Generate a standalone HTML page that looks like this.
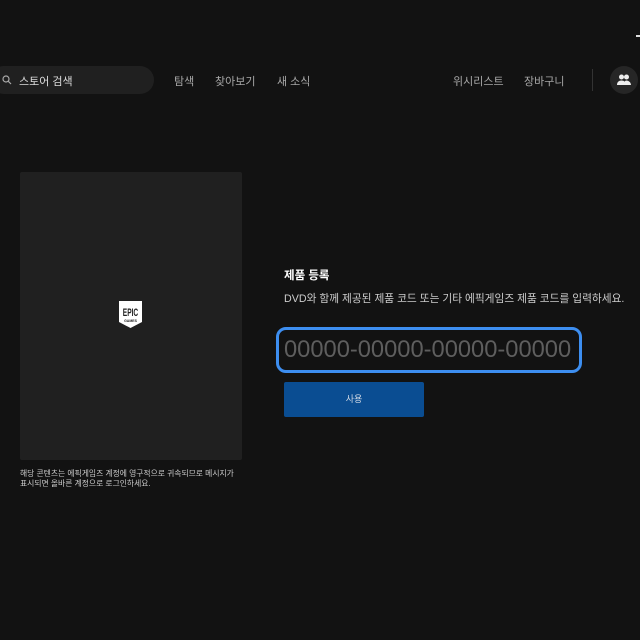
<!DOCTYPE html>
<html><head><meta charset="utf-8"><style>
body{margin:0;width:640px;height:640px;background:#121212;font-family:"Liberation Sans","Noto Sans CJK KR",sans-serif;overflow:hidden;position:relative;color:#ccc}
.a{position:absolute}
.nav{font-size:11px;color:#a8a8a8;top:73px}
</style></head><body>
<div class="a" style="left:636px;top:35px;width:4px;height:2px;background:#ddd"></div>
<div class="a" style="left:-10px;top:66px;width:164px;height:28px;border-radius:14px;background:#202020"></div>
<svg class="a" style="left:2px;top:75px" width="10" height="10" viewBox="0 0 10 10"><circle cx="4" cy="4" r="3" fill="none" stroke="#aaa" stroke-width="1.2"/><path d="M6.2 6.2L9 9" stroke="#aaa" stroke-width="1.2"/></svg>
<div class="a" style="left:19px;top:73px;font-size:11px;color:#ddd">스토어 검색</div>
<div class="a nav" style="left:174px">탐색</div>
<div class="a nav" style="left:215px">찾아보기</div>
<div class="a nav" style="left:277px">새 소식</div>
<div class="a nav" style="left:453px">위시리스트</div>
<div class="a nav" style="left:524px">장바구니</div>
<div class="a" style="left:592px;top:69px;width:1px;height:22px;background:#333"></div>
<div class="a" style="left:610px;top:66px;width:28px;height:28px;border-radius:14px;background:#262626"></div>
<svg class="a" style="left:616px;top:73px" width="16" height="14" viewBox="0 0 16 14"><circle cx="5.5" cy="4" r="2.5" fill="#eee"/><circle cx="10.5" cy="4" r="2.5" fill="#eee"/><path d="M1 12c0-3 2-4.5 4.5-4.5S10 9 10 12zM8 12c0-3 1-4.5 2.5-4.5S15 9 15 12z" fill="#eee"/></svg>
<div class="a" style="left:20px;top:172px;width:222px;height:288px;background:#202020;border-radius:2px"></div>
<svg class="a" style="left:118px;top:300px" width="25" height="30" viewBox="0 0 25 30"><path d="M1 1h23v21l-11.5 6L1 22z" fill="#fff"/><text x="12.5" y="16" text-anchor="middle" font-size="11" font-weight="bold" fill="#202020" transform="translate(12.5 0) scale(0.6 1) translate(-12.5 0)">EPIC</text><text x="12.5" y="22" text-anchor="middle" font-size="3.5" font-weight="bold" fill="#202020">GAMES</text></svg>
<div class="a" style="left:20px;top:469px;font-size:7.8px;line-height:10px;color:#ccc;width:240px;white-space:nowrap">해당 콘텐츠는 에픽게임즈 계정에 영구적으로 귀속되므로 메시지가<br>표시되면 올바른 계정으로 로그인하세요.</div>
<div class="a" style="left:284px;top:267px;font-size:11.5px;color:#fff;font-weight:bold">제품 등록</div>
<div class="a" style="left:284px;top:291px;font-size:10.7px;color:#ccc;white-space:nowrap">DVD와 함께 제공된 제품 코드 또는 기타 에픽게임즈 제품 코드를 입력하세요.</div>
<div class="a" style="left:276px;top:327px;width:300px;height:40px;border:3px solid #3d8ef0;border-radius:10px;background:#121212"></div>
<div class="a" style="left:284px;top:337px;font-size:23.7px;color:#5e5e5e;white-space:nowrap">00000-00000-00000-00000</div>
<div class="a" style="left:284px;top:382px;width:140px;height:35px;background:#0a4d92;border-radius:2px;color:#cfd8e4;font-size:9px;text-align:center;line-height:35px">사용</div>
</body></html>
